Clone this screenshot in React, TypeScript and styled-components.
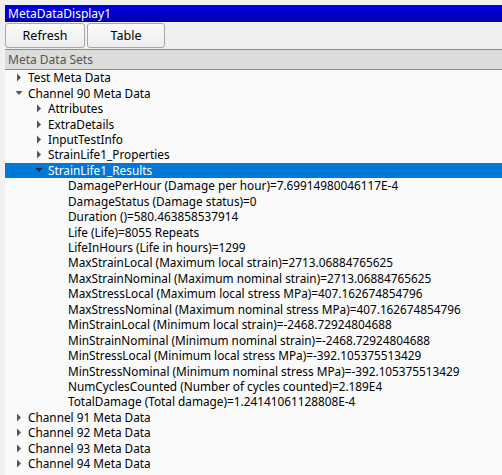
import React from "react";
import styled, { createGlobalStyle } from "styled-components";

const GlobalStyle = createGlobalStyle`
  html, body {
    margin: 0;
    padding: 0;
    background: #f0f0f0;
    font-family: "Noto Sans", "Open Sans", sans-serif;
    font-size: 11.8px;
  }
`;

const Frame = styled.div`
  width: 502px;
  height: 475px;
  box-sizing: border-box;
  padding: 5px 0 0 5px;
  display: flex;
  flex-direction: column;
  overflow: hidden;
`;

const TitleBar = styled.div`
  height: 17px;
  line-height: 17px;
  padding-left: 3px;
  font-size: 12px;
  color: #ffffff;
  background: linear-gradient(to bottom, #0000e8, #0000a8);
`;

const Toolbar = styled.div`
  display: flex;
  gap: 2px;
  padding: 1px 0 1px 0;
  height: 25px;
`;

const Button = styled.button<{ $width: number }>`
  width: ${(p) => p.$width}px;
  height: 25px;
  padding: 0;
  border: 1px solid #a8a8a8;
  border-radius: 3px;
  background: linear-gradient(to bottom, #fbfbfb, #ececec);
  font-family: "Noto Sans", "Open Sans", sans-serif;
  font-size: 12.5px;
  color: #000000;
`;

const Header = styled.div`
  height: 19px;
  line-height: 19px;
  padding-left: 3px;
  font-size: 12px;
  border-top: 1px solid #8c8c8c;
  border-bottom: 1px solid #8c8c8c;
  background: #dcdcdc;
  color: #555555;
`;

const Tree = styled.div`
  flex: 1;
  background: #fafafa;
`;

const Row = styled.div<{ $level: number; $selected?: boolean }>`
  height: 15.45px;
  line-height: 15px;
  display: flex;
  align-items: center;
  padding-left: ${(p) => 5 + p.$level * 20}px;
  background: ${(p) => (p.$selected ? "#0078d7" : "transparent")};
  color: ${(p) => (p.$selected ? "#ffffff" : "#000000")};
  white-space: nowrap;
`;

const Toggle = styled.span`
  width: 18px;
  height: 15px;
  display: flex;
  align-items: center;
  justify-content: center;
  flex-shrink: 0;
`;

const Leaf = styled.span`
  width: 18px;
  flex-shrink: 0;
`;

const Label = styled.span``;

function Arrow({ open, selected }: { open: boolean; selected?: boolean }) {
  const fill = selected ? "#1e2a3a" : "#555555";
  return (
    <Toggle>
      {open ? (
        <svg width="8" height="8" viewBox="0 0 8 8">
          <polygon points="0.5,2 7.5,2 4,6" fill={fill} />
        </svg>
      ) : (
        <svg width="8" height="9" viewBox="0 0 8 9">
          <polygon points="2,0.5 6,4.5 2,8.5" fill={fill} />
        </svg>
      )}
    </Toggle>
  );
}

const results = [
  "DamagePerHour (Damage per hour)=7.69914980046117E-4",
  "DamageStatus (Damage status)=0",
  "Duration ()=580.463858537914",
  "Life (Life)=8055 Repeats",
  "LifeInHours (Life in hours)=1299",
  "MaxStrainLocal (Maximum local strain)=2713.06884765625",
  "MaxStrainNominal (Maximum nominal strain)=2713.06884765625",
  "MaxStressLocal (Maximum local stress MPa)=407.162674854796",
  "MaxStressNominal (Maximum nominal stress MPa)=407.162674854796",
  "MinStrainLocal (Minimum local strain)=-2468.72924804688",
  "MinStrainNominal (Minimum nominal strain)=-2468.72924804688",
  "MinStressLocal (Minimum local stress MPa)=-392.105375513429",
  "MinStressNominal (Minimum nominal stress MPa)=-392.105375513429",
  "NumCyclesCounted (Number of cycles counted)=2.189E4",
  "TotalDamage (Total damage)=1.24141061128808E-4",
];

const groups = ["Attributes", "ExtraDetails", "InputTestInfo", "StrainLife1_Properties"];
const channels = ["Channel 91 Meta Data", "Channel 92 Meta Data", "Channel 93 Meta Data", "Channel 94 Meta Data"];

export default function App() {
  return (
    <>
      <GlobalStyle />
      <Frame>
        <TitleBar>MetaDataDisplay1</TitleBar>
        <Toolbar>
          <Button $width={80}>Refresh</Button>
          <Button $width={78}>Table</Button>
        </Toolbar>
        <Header>Meta Data Sets</Header>
        <Tree>
          <Row $level={0}>
            <Arrow open={false} />
            <Label>Test Meta Data</Label>
          </Row>
          <Row $level={0}>
            <Arrow open />
            <Label>Channel 90 Meta Data</Label>
          </Row>
          {groups.map((g) => (
            <Row key={g} $level={1}>
              <Arrow open={false} />
              <Label>{g}</Label>
            </Row>
          ))}
          <Row $level={1} $selected>
            <Arrow open selected />
            <Label>StrainLife1_Results</Label>
          </Row>
          {results.map((r) => (
            <Row key={r} $level={2}>
              <Leaf />
              <Label>{r}</Label>
            </Row>
          ))}
          {channels.map((c) => (
            <Row key={c} $level={0}>
              <Arrow open={false} />
              <Label>{c}</Label>
            </Row>
          ))}
        </Tree>
      </Frame>
    </>
  );
}
